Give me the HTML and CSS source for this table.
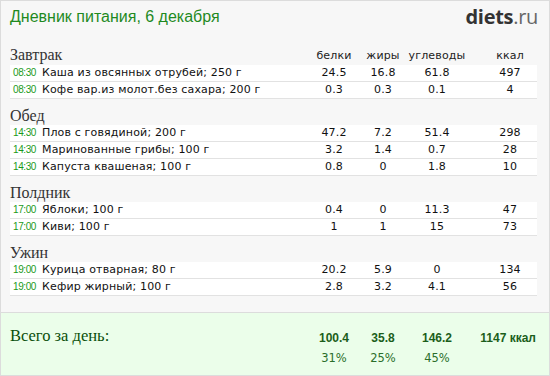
FILE: index.html
```html
<!DOCTYPE html>
<html lang="ru">
<head>
<meta charset="utf-8">
<title>Дневник питания</title>
<link rel="stylesheet" href="styles.css">
</head>
<body>
<div class="panel">
  <header class="top">
    <h1 class="title">Дневник питания, 6 декабря</h1>
    <div class="logo"><b>diets</b>.ru</div>
  </header>
  <div class="diary">
    <section class="meal">
      <div class="meal-head">
        <h2>Завтрак</h2><span>белки</span><span>жиры</span><span>углеводы</span><span class="kcal">ккал</span>
      </div>
      <div class="row"><span class="time">08:30</span><span class="name">Каша из овсянных отрубей; 250 г</span><span>24.5</span><span>16.8</span><span>61.8</span><span class="kcal">497</span></div>
      <div class="row"><span class="time">08:30</span><span class="name">Кофе вар.из молот.без сахара; 200 г</span><span>0.3</span><span>0.3</span><span>0.1</span><span class="kcal">4</span></div>
    </section>
    <section class="meal">
      <div class="meal-head"><h2>Обед</h2></div>
      <div class="row"><span class="time">14:30</span><span class="name">Плов с говядиной; 200 г</span><span>47.2</span><span>7.2</span><span>51.4</span><span class="kcal">298</span></div>
      <div class="row"><span class="time">14:30</span><span class="name">Маринованные грибы; 100 г</span><span>3.2</span><span>1.4</span><span>0.7</span><span class="kcal">28</span></div>
      <div class="row"><span class="time">14:30</span><span class="name">Капуста квашеная; 100 г</span><span>0.8</span><span>0</span><span>1.8</span><span class="kcal">10</span></div>
    </section>
    <section class="meal">
      <div class="meal-head"><h2>Полдник</h2></div>
      <div class="row"><span class="time">17:00</span><span class="name">Яблоки; 100 г</span><span>0.4</span><span>0</span><span>11.3</span><span class="kcal">47</span></div>
      <div class="row"><span class="time">17:00</span><span class="name">Киви; 100 г</span><span>1</span><span>1</span><span>15</span><span class="kcal">73</span></div>
    </section>
    <section class="meal">
      <div class="meal-head"><h2>Ужин</h2></div>
      <div class="row"><span class="time">19:00</span><span class="name">Курица отварная; 80 г</span><span>20.2</span><span>5.9</span><span>0</span><span class="kcal">134</span></div>
      <div class="row"><span class="time">19:00</span><span class="name">Кефир жирный; 100 г</span><span>2.8</span><span>3.2</span><span>4.1</span><span class="kcal">56</span></div>
    </section>
  </div>
  <div class="totals">
    <div class="total-label">Всего за день:</div>
    <b class="sum">100.4</b><b class="sum">35.8</b><b class="sum">146.2</b><b class="sum kcal-sum">1147 ккал</b>
    <span class="pct">31%</span><span class="pct">25%</span><span class="pct">45%</span><span></span>
  </div>
</div>
</body>
</html>
```
FILE: styles.css
```css
html, body {
  margin: 0;
  padding: 0;
  background: #ffffff;
}

.panel {
  box-sizing: border-box;
  width: 550px;
  height: 376px;
  border: 1px solid #dcdcdc;
  background: #f7f7f7;
  display: flex;
  flex-direction: column;
  font-family: "DejaVu Sans", Verdana, sans-serif;
  font-size: 11px;
  letter-spacing: 0.15px;
  color: #111;
}

.top {
  height: 44px;
  display: flex;
  justify-content: space-between;
  align-items: flex-start;
  padding: 0 11px 0 9px;
  letter-spacing: 0;
}

.title {
  margin: 6px 0 0;
  font-weight: normal;
  font-size: 16px;
  line-height: 20px;
  color: #1f8a1f;
  font-family: "Liberation Sans", Arial, sans-serif;
}

.logo {
  margin-top: 4px;
  font-family: "Open Sans", "DejaVu Sans", sans-serif;
  font-size: 20px;
  line-height: 24px;
  color: #666;
  letter-spacing: -0.3px;
}

.logo b {
  font-weight: 700;
  color: #333;
}

.diary {
  padding: 0 12px 0 9px;
}

.meal-head {
  display: grid;
  grid-template-columns: 1fr 50px 48px 60px 70px;
  align-items: center;
  padding-top: 8px;
  height: 18px;
}

.meal:first-child .meal-head {
  padding-top: 0;
  height: 20px;
}

.meal-head h2 {
  margin: 0;
  font-family: "Liberation Serif", "DejaVu Serif", serif;
  font-weight: normal;
  font-size: 16px;
  line-height: 18px;
  letter-spacing: 0;
  color: #333;
}

.meal-head span {
  text-align: center;
  color: #222;
}

.row {
  display: grid;
  grid-template-columns: 29px 1fr 50px 48px 60px 70px;
  align-items: center;
  height: 16px;
  padding-left: 3px;
  background: #fff;
  border-bottom: 1px solid #e2e2e2;
  line-height: 16px;
}

.row span {
  text-align: center;
}

.row .name {
  text-align: left;
  color: #111;
}

.row .time {
  text-align: left;
  font-family: "Liberation Sans", Arial, sans-serif;
  font-size: 10px;
  letter-spacing: -0.4px;
  color: #1a9a1a;
}

.kcal {
  padding-left: 16px;
}

.totals {
  margin-top: 16px;
  flex: 1;
  border-top: 1px solid #dcdcdc;
  background: #ebfeea;
  padding: 15px 12px 0 9px;
  display: grid;
  grid-template-columns: 1fr 50px 48px 60px 70px;
  grid-template-rows: 20px 20px;
  align-items: center;
  letter-spacing: 0;
}

.total-label {
  grid-row: 1 / 3;
  align-self: start;
  margin-top: -2px;
  font-family: "Liberation Serif", "DejaVu Serif", serif;
  font-size: 16.5px;
  line-height: 20px;
  color: #0a4f0a;
}

.sum {
  text-align: center;
  font-family: "Liberation Sans", Arial, sans-serif;
  font-weight: bold;
  font-size: 12px;
  color: #1b5e1b;
}

.sum.kcal-sum {
  text-align: right;
  padding-right: 1px;
  white-space: nowrap;
}

.pct {
  text-align: center;
  font-size: 11.5px;
  color: #2a6e2a;
}
```
